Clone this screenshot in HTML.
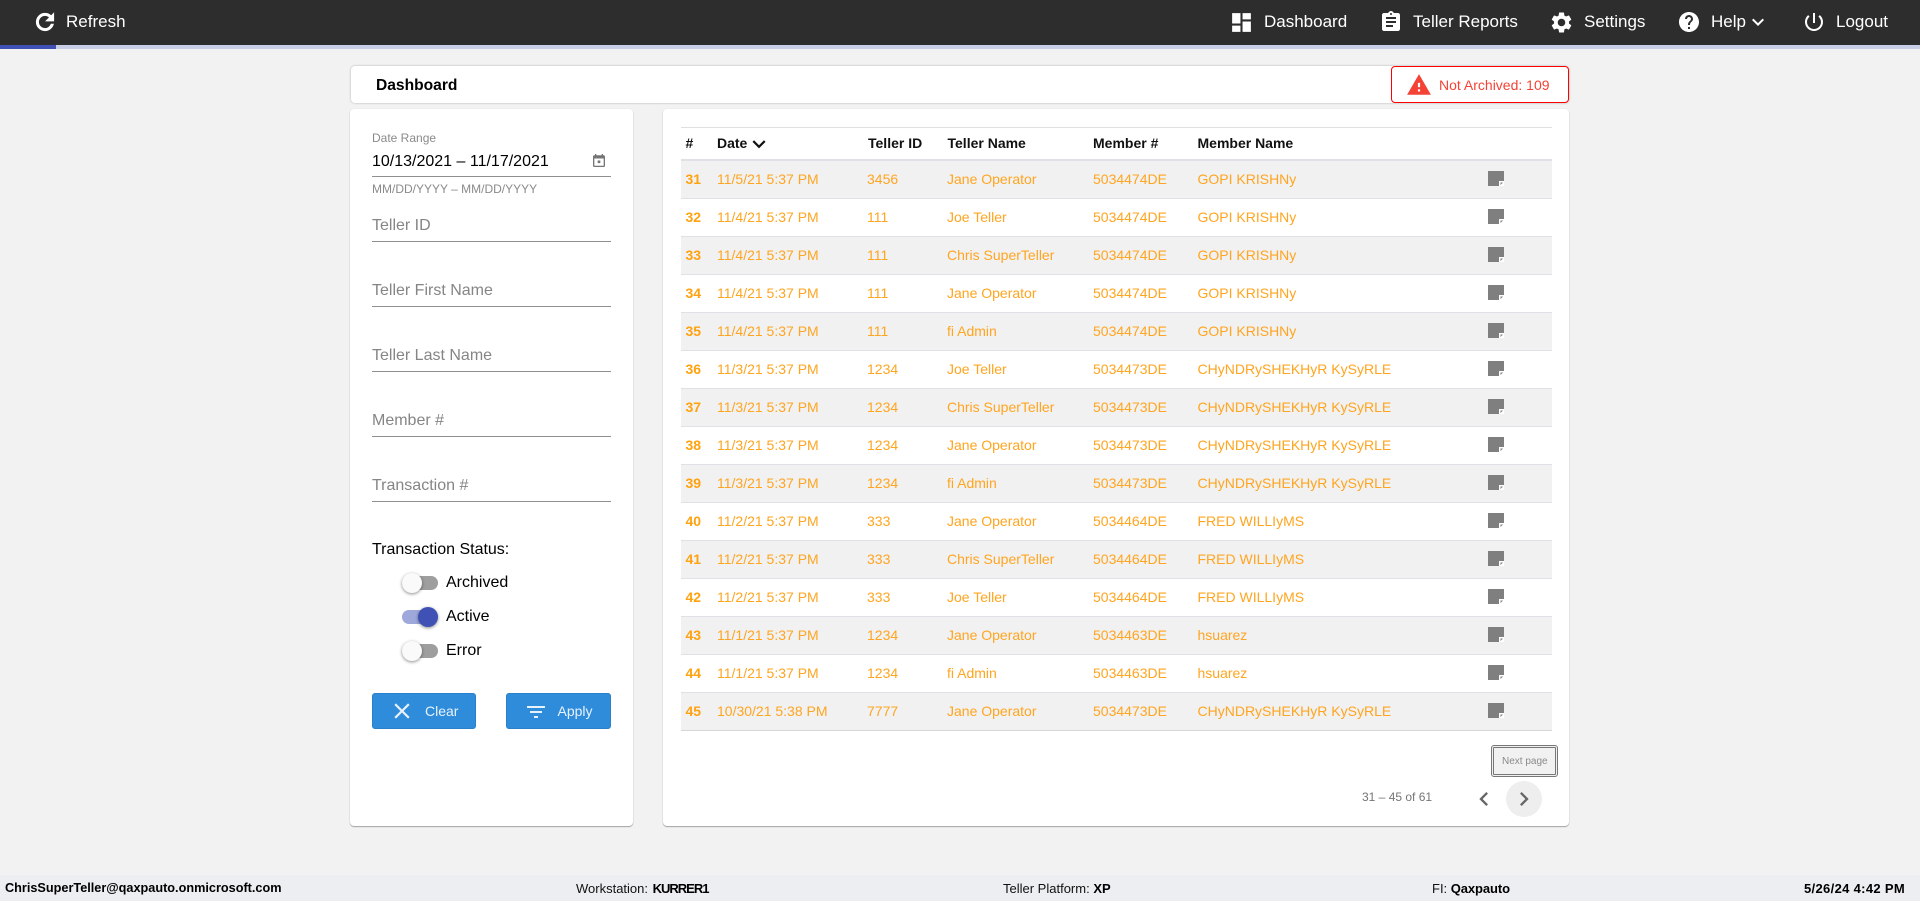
<!DOCTYPE html>
<html><head><meta charset="utf-8"><title>Dashboard</title>
<style>
html,body{margin:0;padding:0;width:1920px;height:901px;overflow:hidden;background:#f2f2f2;font-family:"Liberation Sans",Arial,sans-serif;color:#000}
*{box-sizing:border-box}
.a{position:absolute;white-space:nowrap}
svg{position:absolute;display:block}
.n{color:#fff;font-size:17px;top:11px;line-height:22px}
.card{position:absolute;background:#fff;border-radius:4px;box-shadow:0 1px 1px rgba(0,0,0,.32),0 0 1px rgba(0,0,0,.12)}
.ph{left:372px;font-size:16px;color:#858585;line-height:20px}
.ul{position:absolute;left:372px;width:239px;height:1px;background:#8f8f8f}
.tg{position:absolute;left:402px;width:36px;height:14px;border-radius:7px;background:#9e9e9e}
.th{position:absolute;width:20px;height:20px;border-radius:50%;background:#fafafa;box-shadow:0 1px 3px rgba(0,0,0,.45)}
.l{left:446px;font-size:16px;line-height:20px}
.btn{position:absolute;top:693px;height:36px;background:#2f8cdb;border:1px solid #2a80ca;border-radius:3px}
.bt{color:#e8f2fb;font-size:14px;top:703px;line-height:16px}
.h{font-weight:bold;font-size:14px;top:135px;line-height:16px;color:#111}
.r{position:absolute;left:681px;width:871px;height:38px;border-bottom:1px solid #e0e0e6}
.r.o{background:#f1f1f2}
.r span{position:absolute;top:10px;line-height:16px;font-size:14px;color:#ffa51f;white-space:nowrap}
.r .c0{left:4.5px;font-weight:bold;color:#ffa20f}.r .c1{left:36px}.r .c2{left:186px}.r .c3{left:266px}.r .c4{left:412px}.r .c5{left:516.5px}
.r svg{left:807px;top:10px}
.f{font-size:13px;top:881px;line-height:15px;color:#111}
.f b{color:#000}
</style></head><body>
<svg width="0" height="0" style="position:absolute"><defs><g id="note"><path d="M0 0h16v10h-5v5H0z" fill="#7f7f7f"/><path d="M11 10h5v5h-5z" fill="#fff"/><path d="M12.5 11.5h2.5l-2.5 2.5z" fill="#7f7f7f"/></g></defs></svg>

<div class="a" style="left:0;top:0;width:1920px;height:45px;background:#2d2d2d"></div>
<div class="a" style="left:0;top:45px;width:1920px;height:4px;background:#c8cde8"></div>
<div class="a" style="left:0;top:45px;width:56px;height:4px;background:#3f51b5"></div>

<svg style="left:32px;top:9px" width="26" height="26" viewBox="0 0 24 24" fill="#fff" stroke="#fff" stroke-width=".8"><path d="M17.65 6.35A7.958 7.958 0 0 0 12 4c-4.42 0-7.99 3.58-7.99 8s3.57 8 7.99 8c3.73 0 6.84-2.55 7.73-6h-2.08A5.99 5.99 0 0 1 12 18c-3.31 0-6-2.69-6-6s2.69-6 6-6c1.66 0 3.14.69 4.22 1.78L13 11h7V4l-2.35 2.35z"/></svg>
<div class="a n" style="left:66px">Refresh</div>

<svg style="left:1229px;top:10px" width="25" height="25" viewBox="0 0 24 24" fill="#fff"><path d="M3 13h8V3H3v10zm0 8h8v-6H3v6zm10 0h8V11h-8v10zm0-18v6h8V3h-8z"/></svg>
<div class="a n" style="left:1264px">Dashboard</div>
<svg style="left:1379px;top:10px" width="24" height="24" viewBox="0 0 24 24" fill="#fff"><path d="M19 3h-4.18C14.4 1.84 13.3 1 12 1c-1.3 0-2.4.84-2.82 2H5c-1.1 0-2 .9-2 2v14c0 1.1.9 2 2 2h14c1.1 0 2-.9 2-2V5c0-1.1-.9-2-2-2zm-7 0c.55 0 1 .45 1 1s-.45 1-1 1-1-.45-1-1 .45-1 1-1zm2 14H7v-2h7v2zm3-4H7v-2h10v2zm0-4H7V7h10v2z"/></svg>
<div class="a n" style="left:1413px">Teller Reports</div>
<svg style="left:1549px;top:10px" width="25" height="25" viewBox="0 0 24 24" fill="#fff"><path d="M19.14 12.94c.04-.3.06-.61.06-.94 0-.32-.02-.64-.07-.94l2.03-1.58a.49.49 0 0 0 .12-.61l-1.92-3.32a.488.488 0 0 0-.59-.22l-2.39.96c-.5-.38-1.03-.7-1.62-.94l-.36-2.54a.484.484 0 0 0-.48-.41h-3.84c-.24 0-.43.17-.47.41l-.36 2.54c-.59.24-1.13.57-1.62.94l-2.39-.96c-.22-.08-.47 0-.59.22L2.74 8.87c-.12.21-.08.47.12.61l2.03 1.58c-.05.3-.09.63-.09.94s.02.64.07.94l-2.03 1.58a.49.49 0 0 0-.12.61l1.92 3.32c.12.22.37.29.59.22l2.39-.96c.5.38 1.03.7 1.62.94l.36 2.54c.05.24.24.41.48.41h3.84c.24 0 .44-.17.47-.41l.36-2.54c.59-.24 1.13-.56 1.62-.94l2.39.96c.22.08.47 0 .59-.22l1.92-3.32c.12-.22.07-.47-.12-.61l-2.01-1.58zM12 15.6c-1.98 0-3.6-1.62-3.6-3.6s1.62-3.6 3.6-3.6 3.6 1.62 3.6 3.6-1.62 3.6-3.6 3.6z"/></svg>
<div class="a n" style="left:1584px">Settings</div>
<svg style="left:1677px;top:10px" width="24" height="24" viewBox="0 0 24 24" fill="#fff"><path d="M12 2C6.48 2 2 6.48 2 12s4.48 10 10 10 10-4.48 10-10S17.52 2 12 2zm1 17h-2v-2h2v2zm2.07-7.75l-.9.92C13.45 12.9 13 13.5 13 15h-2v-.5c0-1.1.45-2.1 1.17-2.83l1.24-1.26c.37-.36.59-.86.59-1.41 0-1.1-.9-2-2-2s-2 .9-2 2H8c0-2.21 1.79-4 4-4s4 1.79 4 4c0 .88-.36 1.68-.93 2.25z"/></svg>
<div class="a n" style="left:1711px">Help</div>
<svg style="left:1746px;top:10px" width="24" height="24" viewBox="0 0 24 24" fill="#fff"><path d="M7.41 8.59L12 13.17l4.59-4.58L18 10l-6 6-6-6 1.41-1.41z"/></svg>
<svg style="left:1802px;top:10px" width="24" height="24" viewBox="0 0 24 24" fill="#fff"><path d="M13 3h-2v10h2V3zm4.83 2.17l-1.42 1.42C17.99 7.86 19 9.81 19 12c0 3.87-3.13 7-7 7s-7-3.13-7-7c0-2.19 1.01-4.14 2.58-5.42L6.17 5.17C4.23 6.82 3 9.26 3 12c0 4.97 4.03 9 9 9s9-4.03 9-9c0-2.74-1.23-5.18-3.17-6.83z"/></svg>
<div class="a n" style="left:1836px">Logout</div>

<!-- header strip -->
<div class="card" style="left:351px;top:66px;width:1218px;height:37px;box-shadow:0 0 2px rgba(0,0,0,.28)"></div>
<div class="a" style="left:376px;top:77px;font-size:15.6px;font-weight:bold;line-height:18px">Dashboard</div>
<div class="a" style="left:1391px;top:66px;width:178px;height:37px;background:#fff;border:1px solid #f00;border-radius:4px"></div>
<svg style="left:1406px;top:72px" width="26" height="26" viewBox="0 0 24 24" fill="#f44336"><path d="M1 21h22L12 2 1 21zm12-3h-2v-2h2v2zm0-4h-2v-4h2v4z"/></svg>
<div class="a" style="left:1439px;top:77px;font-size:14px;line-height:16px;color:#f44336">Not Archived: 109</div>

<!-- left card -->
<div class="card" style="left:350px;top:109px;width:283px;height:717px"></div>
<div class="a" style="left:372px;top:131px;font-size:12px;line-height:14px;color:#8a8a8a">Date Range</div>
<div class="a" style="left:372px;top:153px;font-size:16px;line-height:18px">10/13/2021 – 11/17/2021</div>
<svg style="left:593px;top:154px" width="12" height="13" viewBox="3 1 18 20" preserveAspectRatio="none" fill="#757575"><path d="M19 3h-1V1h-2v2H8V1H6v2H5c-1.11 0-1.99.9-1.99 2L3 19c0 1.1.89 2 2 2h14c1.1 0 2-.9 2-2V5c0-1.1-.9-2-2-2zm0 16H5V8h14v11zM10 11h4v4h-4z"/></svg>
<div class="ul" style="top:176px"></div>
<div class="a" style="left:372px;top:182px;font-size:12px;line-height:14px;color:#8a8a8a">MM/DD/YYYY – MM/DD/YYYY</div>

<div class="a ph" style="top:216px">Teller ID</div><div class="ul" style="top:241px"></div>
<div class="a ph" style="top:281px">Teller First Name</div><div class="ul" style="top:306px"></div>
<div class="a ph" style="top:346px">Teller Last Name</div><div class="ul" style="top:371px"></div>
<div class="a ph" style="top:411px">Member #</div><div class="ul" style="top:436px"></div>
<div class="a ph" style="top:476px">Transaction #</div><div class="ul" style="top:501px"></div>

<div class="a" style="left:372px;top:540px;font-size:16px;line-height:20px">Transaction Status:</div>
<div class="tg" style="top:576px"></div><div class="th" style="left:402px;top:573px"></div>
<div class="a l" style="top:573px">Archived</div>
<div class="tg" style="top:610px;background:#9fa8da"></div><div class="th" style="left:418px;top:607px;background:#3f51b5"></div>
<div class="a l" style="top:607px">Active</div>
<div class="tg" style="top:644px"></div><div class="th" style="left:402px;top:641px"></div>
<div class="a l" style="top:641px">Error</div>

<div class="btn" style="left:372px;width:104px"></div>
<svg style="left:389px;top:698px" width="26" height="26" viewBox="0 0 24 24" fill="#e8f2fb"><path d="M19 6.41L17.59 5 12 10.59 6.41 5 5 6.41 10.59 12 5 17.59 6.41 19 12 13.41 17.59 19 19 17.59 13.41 12z"/></svg>
<div class="a bt" style="left:425px">Clear</div>
<div class="btn" style="left:506px;width:105px"></div>
<svg style="left:524px;top:700px" width="24" height="24" viewBox="0 0 24 24" fill="#e8f2fb"><path d="M10 18h4v-2h-4v2zM3 6v2h18V6H3zm3 7h12v-2H6v2z"/></svg>
<div class="a bt" style="left:557.5px">Apply</div>

<!-- right card -->
<div class="card" style="left:663px;top:109px;width:906px;height:717px"></div>
<div class="a" style="left:681px;top:127px;width:871px;height:1px;background:#e0e0e3"></div>
<div class="a h" style="left:685.5px">#</div>
<div class="a h" style="left:717px">Date</div>
<svg style="left:746px;top:131px" width="26" height="26" viewBox="0 0 24 24" fill="#111"><path d="M7.41 8.59L12 13.17l4.59-4.58L18 10l-6 6-6-6 1.41-1.41z"/></svg>
<div class="a h" style="left:868px">Teller ID</div>
<div class="a h" style="left:947.5px">Teller Name</div>
<div class="a h" style="left:1093px">Member #</div>
<div class="a h" style="left:1197.5px">Member Name</div>
<div class="a" style="left:681px;top:159px;width:871px;height:2px;background:#dfe1e6"></div>

<div class="r o" style="top:161px"><span class="c0">31</span><span class="c1">11/5/21 5:37 PM</span><span class="c2">3456</span><span class="c3">Jane Operator</span><span class="c4">5034474DE</span><span class="c5">GOPI KRISHNy</span><svg width="16" height="15"><use href="#note"/></svg></div>
<div class="r" style="top:199px"><span class="c0">32</span><span class="c1">11/4/21 5:37 PM</span><span class="c2">111</span><span class="c3">Joe Teller</span><span class="c4">5034474DE</span><span class="c5">GOPI KRISHNy</span><svg width="16" height="15"><use href="#note"/></svg></div>
<div class="r o" style="top:237px"><span class="c0">33</span><span class="c1">11/4/21 5:37 PM</span><span class="c2">111</span><span class="c3">Chris SuperTeller</span><span class="c4">5034474DE</span><span class="c5">GOPI KRISHNy</span><svg width="16" height="15"><use href="#note"/></svg></div>
<div class="r" style="top:275px"><span class="c0">34</span><span class="c1">11/4/21 5:37 PM</span><span class="c2">111</span><span class="c3">Jane Operator</span><span class="c4">5034474DE</span><span class="c5">GOPI KRISHNy</span><svg width="16" height="15"><use href="#note"/></svg></div>
<div class="r o" style="top:313px"><span class="c0">35</span><span class="c1">11/4/21 5:37 PM</span><span class="c2">111</span><span class="c3">fi Admin</span><span class="c4">5034474DE</span><span class="c5">GOPI KRISHNy</span><svg width="16" height="15"><use href="#note"/></svg></div>
<div class="r" style="top:351px"><span class="c0">36</span><span class="c1">11/3/21 5:37 PM</span><span class="c2">1234</span><span class="c3">Joe Teller</span><span class="c4">5034473DE</span><span class="c5">CHyNDRySHEKHyR KySyRLE</span><svg width="16" height="15"><use href="#note"/></svg></div>
<div class="r o" style="top:389px"><span class="c0">37</span><span class="c1">11/3/21 5:37 PM</span><span class="c2">1234</span><span class="c3">Chris SuperTeller</span><span class="c4">5034473DE</span><span class="c5">CHyNDRySHEKHyR KySyRLE</span><svg width="16" height="15"><use href="#note"/></svg></div>
<div class="r" style="top:427px"><span class="c0">38</span><span class="c1">11/3/21 5:37 PM</span><span class="c2">1234</span><span class="c3">Jane Operator</span><span class="c4">5034473DE</span><span class="c5">CHyNDRySHEKHyR KySyRLE</span><svg width="16" height="15"><use href="#note"/></svg></div>
<div class="r o" style="top:465px"><span class="c0">39</span><span class="c1">11/3/21 5:37 PM</span><span class="c2">1234</span><span class="c3">fi Admin</span><span class="c4">5034473DE</span><span class="c5">CHyNDRySHEKHyR KySyRLE</span><svg width="16" height="15"><use href="#note"/></svg></div>
<div class="r" style="top:503px"><span class="c0">40</span><span class="c1">11/2/21 5:37 PM</span><span class="c2">333</span><span class="c3">Jane Operator</span><span class="c4">5034464DE</span><span class="c5">FRED WILLIyMS</span><svg width="16" height="15"><use href="#note"/></svg></div>
<div class="r o" style="top:541px"><span class="c0">41</span><span class="c1">11/2/21 5:37 PM</span><span class="c2">333</span><span class="c3">Chris SuperTeller</span><span class="c4">5034464DE</span><span class="c5">FRED WILLIyMS</span><svg width="16" height="15"><use href="#note"/></svg></div>
<div class="r" style="top:579px"><span class="c0">42</span><span class="c1">11/2/21 5:37 PM</span><span class="c2">333</span><span class="c3">Joe Teller</span><span class="c4">5034464DE</span><span class="c5">FRED WILLIyMS</span><svg width="16" height="15"><use href="#note"/></svg></div>
<div class="r o" style="top:617px"><span class="c0">43</span><span class="c1">11/1/21 5:37 PM</span><span class="c2">1234</span><span class="c3">Jane Operator</span><span class="c4">5034463DE</span><span class="c5">hsuarez</span><svg width="16" height="15"><use href="#note"/></svg></div>
<div class="r" style="top:655px"><span class="c0">44</span><span class="c1">11/1/21 5:37 PM</span><span class="c2">1234</span><span class="c3">fi Admin</span><span class="c4">5034463DE</span><span class="c5">hsuarez</span><svg width="16" height="15"><use href="#note"/></svg></div>
<div class="r o" style="top:693px;border-bottom-color:#d6d6d6"><span class="c0">45</span><span class="c1">10/30/21 5:38 PM</span><span class="c2">7777</span><span class="c3">Jane Operator</span><span class="c4">5034473DE</span><span class="c5">CHyNDRySHEKHyR KySyRLE</span><svg width="16" height="15"><use href="#note"/></svg></div>

<div class="a" style="left:1491px;top:745px;width:67px;height:32px;background:#f1f1f1;border:3px double #777;border-radius:3px"></div>
<div class="a" style="left:1502px;top:756px;font-size:10px;line-height:12px;color:#8a8a8a">Next page</div>
<div class="a" style="left:1362px;top:790px;font-size:12px;line-height:14px;color:#757575">31 – 45 of 61</div>
<svg style="left:1470px;top:785px" width="28" height="28" viewBox="0 0 24 24" fill="#666"><path d="M15.41 7.41L14 6l-6 6 6 6 1.41-1.41L10.83 12z"/></svg>
<div class="a" style="left:1506px;top:781px;width:36px;height:36px;border-radius:50%;background:#eee"></div>
<svg style="left:1510px;top:785px" width="28" height="28" viewBox="0 0 24 24" fill="#666"><path d="M10 6L8.59 7.41 13.17 12l-4.58 4.59L10 18l6-6z"/></svg>

<!-- footer -->
<div class="a" style="left:0;top:875px;width:1920px;height:26px;background:#eceef1"></div>
<div class="a f" style="left:5px;font-size:12.7px"><b>ChrisSuperTeller@qaxpauto.onmicrosoft.com</b></div>
<div class="a f" style="left:576px">Workstation: <b style="letter-spacing:-1px;margin-left:1px">KURRER1</b></div>
<div class="a f" style="left:1003px">Teller Platform: <b>XP</b></div>
<div class="a f" style="left:1432px">FI: <b style="letter-spacing:-.1px">Qaxpauto</b></div>
<div class="a f" style="left:1804px"><b style="letter-spacing:.33px">5/26/24 4:42 PM</b></div>
</body></html>
